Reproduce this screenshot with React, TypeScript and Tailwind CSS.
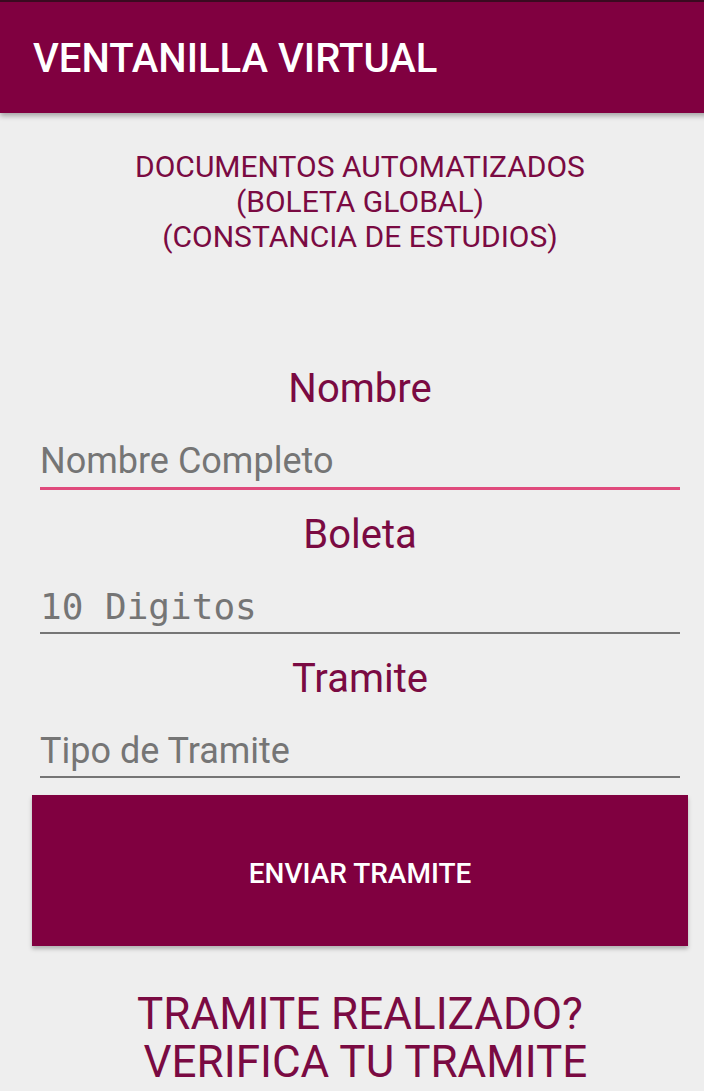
export default function App() {
  const label = "text-center text-[40px] leading-[48px] text-[#7a0a42]";
  const field = "text-[36px] leading-none text-[#757575]";
  return (
    <div className="flex h-[1091px] w-[710px] overflow-hidden bg-white" style={{ fontFamily: "Roboto, sans-serif" }}>
      <div className="w-[704px] shrink-0 overflow-hidden bg-[#eeeeee]">
        <div className="flex w-[720px] flex-col">
          <header className="relative z-10 h-[113px] shrink-0 border-t-2 border-[#3a0a20] bg-[#800040] shadow-[0_3px_5px_rgba(0,0,0,0.3)]">
            <h1 className="pl-[33px] pt-[37px] text-[40px] font-medium leading-none text-white">VENTANILLA VIRTUAL</h1>
          </header>

          <div className="mt-[36px] text-center text-[30px] leading-[35px] text-[#7a0a42]">
            <p>DOCUMENTOS AUTOMATIZADOS</p>
            <p>(BOLETA GLOBAL)</p>
            <p>(CONSTANCIA DE ESTUDIOS)</p>
          </div>

          <div className="mt-[111px] flex flex-col px-[40px]">
            <p className={label}>Nombre</p>
            <div className="mt-[24px] flex h-[48px] items-center">
              <span className={field}>Nombre Completo</span>
            </div>
            <div className="mt-[2px] h-[3px] bg-[#e04a7c]" />

            <p className={label + " mt-[21px]"}>Boleta</p>
            <div className="mt-[24px] flex h-[48px] items-center">
              <span className="text-[36px] leading-none text-[#757575]" style={{ fontFamily: '"DejaVu Sans Mono", monospace' }}>10 Digitos</span>
            </div>
            <div className="mt-[1px] h-[2px] bg-[#757575]" />

            <p className={label + " mt-[21px]"}>Tramite</p>
            <div className="mt-[24px] flex h-[48px] items-center">
              <span className={field}>Tipo de Tramite</span>
            </div>
            <div className="mt-[1px] h-[2px] bg-[#757575]" />
          </div>

          <div className="mx-[32px] mt-[17px] flex h-[151px] items-center justify-center bg-[#800040] pt-[6px] shadow-[0_3px_4px_rgba(0,0,0,0.25)]">
            <span className="text-[28px] font-medium text-white">ENVIAR TRAMITE</span>
          </div>

          <div className="mt-[44px] text-center text-[44px] leading-[48px] text-[#7a0a42]">
            <p>TRAMITE REALIZADO?</p>
            <p className="whitespace-pre"> VERIFICA TU TRAMITE</p>
          </div>
        </div>
      </div>
      <div className="flex-1 bg-white" />
    </div>
  );
}
